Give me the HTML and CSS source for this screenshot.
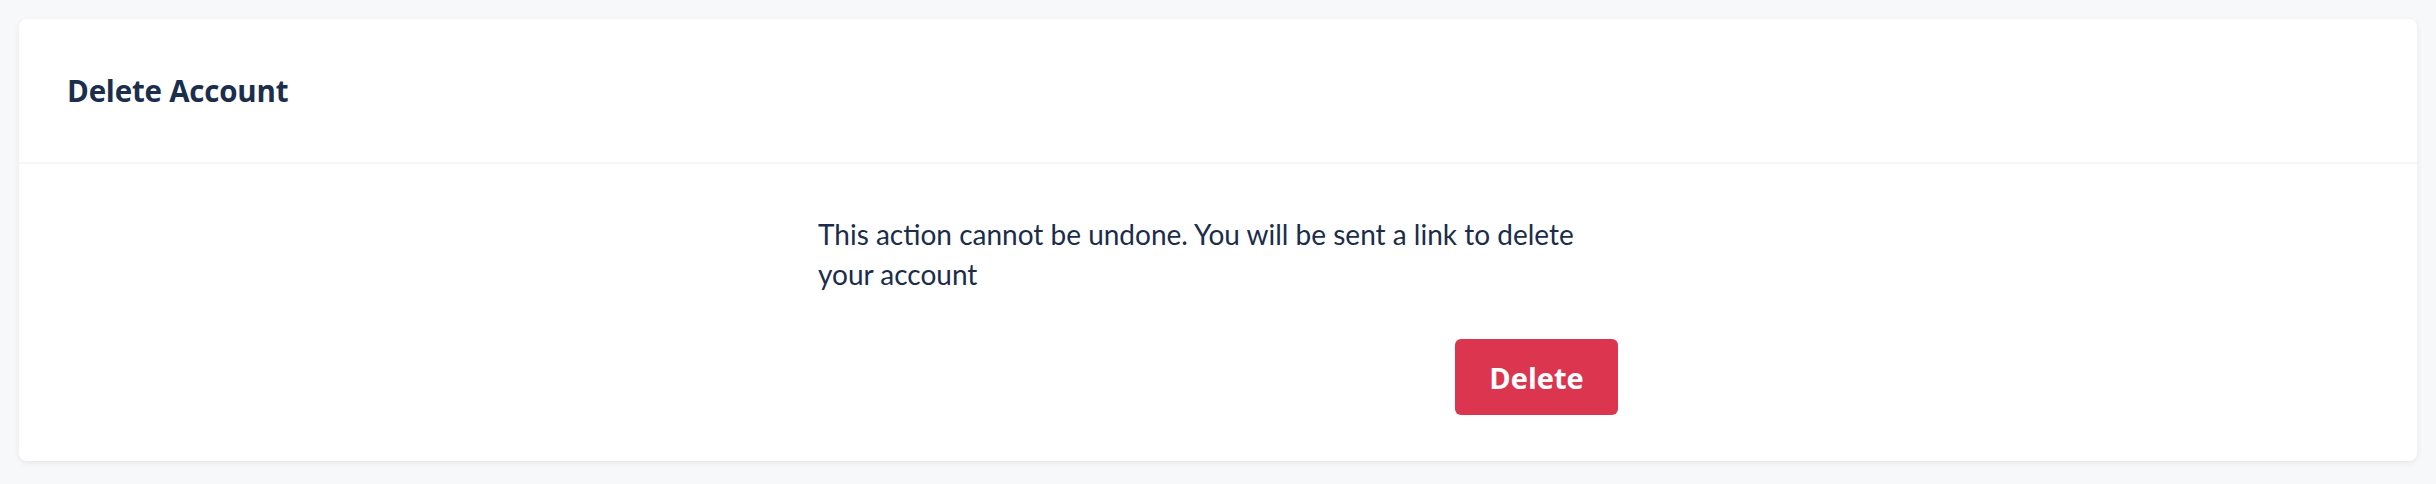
FILE: index.html
```html
<!DOCTYPE html>
<html lang="en">
<head>
    <meta charset="UTF-8">
    <meta name="viewport" content="width=device-width, initial-scale=1.0">
    <title>Delete Account</title>
    <link rel="stylesheet" href="styles.css">
</head>
<body>
    <div class="card">
        <div class="card-header">
            <h2 class="card-title">Delete Account</h2>
        </div>

        <div class="card-body">
            <div class="content">
                <p class="note">This action cannot be undone. You will be sent a link to delete your account</p>
                <div class="actions">
                    <button class="btn btn-danger">Delete</button>
                </div>
            </div>
        </div>
    </div>
</body>
</html>
```

FILE: styles.css
```css
* {
    margin: 0;
    padding: 0;
    box-sizing: border-box;
    font-family: Lato, "Open Sans", sans-serif;
}

body {
    background: #f7f8fa;
    padding: 19px;
    color: #1b2d4a;
}

/* card */
.card {
    background: #fff;
    border-radius: 8px;
    box-shadow: 0 2px 6px rgba(0,0,0,0.07);
}
.card-header {
    height: 145px;
    display: flex;
    align-items: center;
    padding: 0 48px;
    border-bottom: 2px solid #f5f6f8;
}
.card-title {
    font-family: "Open Sans", Lato, sans-serif;
    font-size: 29.5px;
    font-weight: 700;
    color: #1b2f4d;
    letter-spacing: -0.2px;
}

.card-body {
    padding: 50px 0 46px;
}
.content {
    width: 800px;
    margin: 0 auto;
}
.note {
    font-size: 28px;
    line-height: 40px;
    color: #1b2d4a;
}

/* buttons */
.actions {
    display: flex;
    justify-content: flex-end;
    margin-top: 45px;
}
.btn {
    width: 163px;
    height: 76px;
    border: none;
    border-radius: 6px;
    font-family: "Open Sans", Lato, sans-serif;
    font-size: 29px;
    font-weight: 700;
    cursor: pointer;
}
.btn-danger {
    background: #dc3550;
    color: #fff;
}
```
